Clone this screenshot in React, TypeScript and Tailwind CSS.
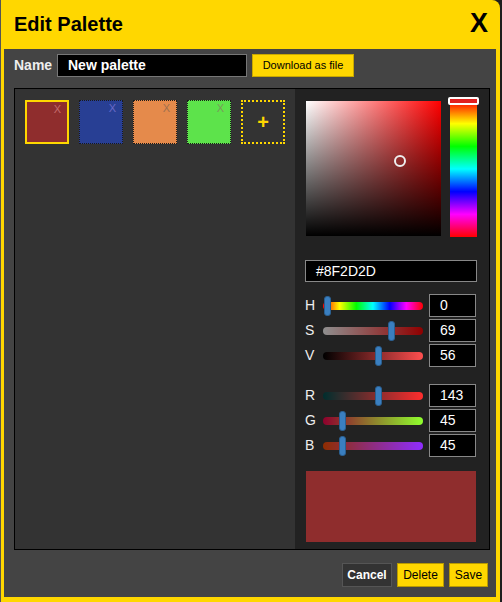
import React from "react";

const swatches = [
  { color: "bg-[#8f2d2d]", x: "text-[#c46a6a]", selected: true },
  { color: "bg-[#283f94]", x: "text-[#6a6ac8]", selected: false },
  { color: "bg-[#e58a4b]", x: "text-[#a0704e]", selected: false },
  { color: "bg-[#5de34b]", x: "text-[#7a9a5a]", selected: false },
];

const sliders = [
  { label: "H", value: "0", pos: 5, track: "bg-[linear-gradient(to_right,#f00,#ff0,#0f0,#0ff,#00f,#f0f,#f00)]" },
  { label: "S", value: "69", pos: 69, track: "bg-[linear-gradient(to_right,#8f8f8f,#8f0000)]" },
  { label: "V", value: "56", pos: 56, track: "bg-[linear-gradient(to_right,#000,#ff4f4f)]" },
];

const rgbSliders = [
  { label: "R", value: "143", pos: 56, track: "bg-[linear-gradient(to_right,#002d2d,#ff2d2d)]" },
  { label: "G", value: "45", pos: 20, track: "bg-[linear-gradient(to_right,#8f002d,#8fff2d)]" },
  { label: "B", value: "45", pos: 20, track: "bg-[linear-gradient(to_right,#8f2d00,#8f2dff)]" },
];

function SliderRow({ label, value, pos, track }: { label: string; value: string; pos: number; track: string }) {
  return (
    <div className="flex items-center h-[23px]">
      <div className="w-[18px] text-[14px] text-[#eee]">{label}</div>
      <div className="relative w-[100px] h-[8px] mr-[6px]">
        <div className={`w-full h-full rounded-full ${track}`} />
        <div
          className="absolute top-[-6px] w-[7px] h-[20px] rounded-[3px] bg-[#3a7fc0] border border-[#2a5f90]"
          style={{ left: `calc(${pos}% - 4px)` }}
        />
      </div>
      <div className="w-[47px] h-[23px] bg-black border border-[#888] text-white text-[14px] pl-[10px] flex items-center">
        {value}
      </div>
    </div>
  );
}

export default function App() {
  return (
    <div className="w-[502px] h-[602px] bg-[#1e1e1e] font-['Liberation_Sans',Arial,sans-serif]">
      <div className="w-[500px] h-[602px] bg-[#ffd700] rounded-tr-[8px] border-l border-[#555] pl-[3px] pr-[4px] pb-[5px] flex flex-col">
        <div className="h-[49px] flex items-center justify-between pl-[10px] pr-[8px] shrink-0">
          <div className="text-[20px] font-bold text-black mt-[-2px]">Edit Palette</div>
          <div className="text-[27px] font-bold text-black leading-none mt-[-2px]">X</div>
        </div>
        <div className="flex-1 bg-[#444] pl-[10px] pr-[6px] pt-[5px] flex flex-col">
          <div className="flex items-center h-[23px]">
            <div className="text-[14px] font-bold text-[#eee] w-[43px]">Name</div>
            <div className="w-[190px] h-[23px] bg-black border border-[#777] text-white text-[14px] font-bold pl-[10px] flex items-center">
              New palette
            </div>
            <button className="ml-[5px] w-[102px] h-[23px] bg-[#ffd700] border border-[#c8a800] text-black text-[11px]">
              Download as file
            </button>
          </div>
          <div className="mt-[11px] w-[476px] h-[462px] border border-black flex">
            <div className="w-[280px] bg-[#333] pl-[10px] pt-[11px] flex gap-[10px] items-start">
              {swatches.map((s, i) => (
                <div
                  key={i}
                  className={`relative w-[44px] h-[44px] ${s.color} ${s.selected ? "border-2 border-[#ffd700]" : "border border-dotted border-[#1a1a1a]"}`}
                >
                  <span className={`absolute right-[6px] top-[2px] text-[11px] leading-none ${s.x}`}>X</span>
                </div>
              ))}
              <div className="w-[44px] h-[44px] border-2 border-dotted border-[#ffd700] flex items-center justify-center text-[#ffd700] text-[20px] font-bold leading-none">
                +
              </div>
            </div>
            <div className="flex-1 bg-[#222] pl-[10px] pt-[12px] flex flex-col">
              <div className="flex gap-[9px] pl-[1px]">
                <div className="relative w-[135px] h-[135px] bg-[linear-gradient(to_top,#000,transparent),linear-gradient(to_right,#fff,#f00)]">
                  <div className="absolute left-[88px] top-[54px] w-[12px] h-[12px] rounded-full border-2 border-[#eee]" />
                </div>
                <div className="relative w-[27px] h-[136px] bg-[linear-gradient(to_bottom,#f00,#ff0,#0f0,#0ff,#00f,#f0f,#f00)]">
                  <div className="absolute left-[-2px] top-[-4px] w-[31px] h-[8px] rounded-[2px] border-2 border-white bg-[#e02020]" />
                </div>
              </div>
              <div className="mt-[23px] w-[172px] h-[22px] bg-black border border-[#888] text-white text-[14px] pl-[10px] flex items-center">
                #8F2D2D
              </div>
              <div className="mt-[12px] flex flex-col gap-[2px]">
                {sliders.map((s) => (
                  <SliderRow key={s.label} {...s} />
                ))}
              </div>
              <div className="mt-[17px] flex flex-col gap-[2px]">
                {rgbSliders.map((s) => (
                  <SliderRow key={s.label} {...s} />
                ))}
              </div>
              <div className="mt-[14px] ml-[1px] w-[170px] h-[71px] bg-[#8f2d2d]" />
            </div>
          </div>
          <div className="flex justify-end gap-[5px] mt-[13px] pr-[2px]">
            <button className="w-[50px] h-[24px] bg-[#333] border border-[#555] text-white text-[12px] font-bold">Cancel</button>
            <button className="w-[47px] h-[24px] bg-[#ffd700] border border-[#b89a00] text-black text-[12px]">Delete</button>
            <button className="w-[39px] h-[24px] bg-[#ffd700] border border-[#b89a00] text-black text-[12px]">Save</button>
          </div>
        </div>
      </div>
    </div>
  );
}
